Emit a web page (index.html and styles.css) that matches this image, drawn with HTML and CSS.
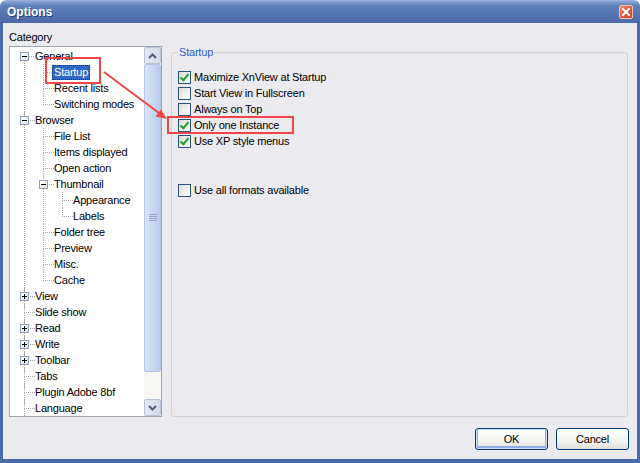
FILE: index.html
```html
<!DOCTYPE html>
<html lang="en">
<head>
    <meta charset="UTF-8">
    <meta name="viewport" content="width=device-width, initial-scale=1.0">
    <title>Options</title>
    <link rel="stylesheet" href="styles.css">
</head>
<body>
    <div class="window">
        <div class="titlebar">
            <span class="title">Options</span>
            <span class="close-btn">
                <svg width="12" height="12" viewBox="0 0 12 12"><path d="M3 3 L9 9 M9 3 L3 9" stroke="#fff" stroke-width="2" stroke-linecap="square"/></svg>
            </span>
        </div>

        <div class="dialog-body">
            <div class="main">
                <div class="category">
                    <div class="category-label">Category</div>
                    <div class="tree-box">
                        <ul class="tree">
                            <li class="has-children">
                                <div class="node"><span class="toggle"></span><span class="label">General</span></div>
                                <ul>
                                    <li><div class="node"><span class="label selected">Startup</span></div></li>
                                    <li><div class="node"><span class="label">Recent lists</span></div></li>
                                    <li><div class="node"><span class="label">Switching modes</span></div></li>
                                </ul>
                            </li>
                            <li class="has-children">
                                <div class="node"><span class="toggle"></span><span class="label">Browser</span></div>
                                <ul>
                                    <li><div class="node"><span class="label">File List</span></div></li>
                                    <li><div class="node"><span class="label">Items displayed</span></div></li>
                                    <li><div class="node"><span class="label">Open action</span></div></li>
                                    <li class="has-children">
                                        <div class="node"><span class="toggle"></span><span class="label">Thumbnail</span></div>
                                        <ul>
                                            <li><div class="node"><span class="label">Appearance</span></div></li>
                                            <li><div class="node"><span class="label">Labels</span></div></li>
                                        </ul>
                                    </li>
                                    <li><div class="node"><span class="label">Folder tree</span></div></li>
                                    <li><div class="node"><span class="label">Preview</span></div></li>
                                    <li><div class="node"><span class="label">Misc.</span></div></li>
                                    <li><div class="node"><span class="label">Cache</span></div></li>
                                </ul>
                            </li>
                            <li><div class="node"><span class="toggle plus"></span><span class="label">View</span></div></li>
                            <li><div class="node"><span class="label">Slide show</span></div></li>
                            <li><div class="node"><span class="toggle plus"></span><span class="label">Read</span></div></li>
                            <li><div class="node"><span class="toggle plus"></span><span class="label">Write</span></div></li>
                            <li><div class="node"><span class="toggle plus"></span><span class="label">Toolbar</span></div></li>
                            <li><div class="node"><span class="label">Tabs</span></div></li>
                            <li><div class="node"><span class="label">Plugin Adobe 8bf</span></div></li>
                            <li><div class="node"><span class="label">Language</span></div></li>
                        </ul>

                        <div class="scrollbar">
                            <div class="sb-btn">
                                <svg width="9" height="6" viewBox="0 0 9 6"><path d="M1 5 L4.5 1.5 L8 5" fill="none" stroke="#4d6185" stroke-width="2"/></svg>
                            </div>
                            <div class="sb-thumb">
                                <svg width="8" height="8" viewBox="0 0 8 8"><path d="M0 0.5 H8 M0 2.5 H8 M0 4.5 H8 M0 6.5 H8" stroke="#8ea5cf" stroke-width="1"/></svg>
                            </div>
                            <div class="sb-track"></div>
                            <div class="sb-btn">
                                <svg width="9" height="6" viewBox="0 0 9 6"><path d="M1 1 L4.5 4.5 L8 1" fill="none" stroke="#4d6185" stroke-width="2"/></svg>
                            </div>
                        </div>
                    </div>
                </div>

                <fieldset class="group">
                    <legend>Startup</legend>
                    <div class="options">
                        <div class="option"><span class="check on"></span>Maximize XnView at Startup</div>
                        <div class="option"><span class="check"></span>Start View in Fullscreen</div>
                        <div class="option"><span class="check"></span>Always on Top</div>
                        <div class="option"><span class="check on"></span>Only one Instance</div>
                        <div class="option"><span class="check on"></span>Use XP style menus</div>
                        <div class="option spaced"><span class="check"></span>Use all formats available</div>
                    </div>
                </fieldset>
            </div>

            <div class="buttons">
                <button class="btn default">OK</button>
                <button class="btn">Cancel</button>
            </div>
        </div>

        <!-- red markup drawn over the dialog -->
        <svg class="annotations" width="640" height="463" viewBox="0 0 640 463">
            <rect x="46" y="58" width="54" height="25" fill="none" stroke="#ef4747" stroke-width="2"/>
            <rect x="168" y="117" width="125" height="16" fill="none" stroke="#ef4747" stroke-width="2"/>
            <line x1="104" y1="72" x2="159" y2="113" stroke="#ef4747" stroke-width="2"/>
            <polygon points="167,119 155.6,116.6 160.8,109.4" fill="#ef4747"/>
        </svg>
    </div>
</body>
</html>
```

FILE: styles.css
```css
* {
    box-sizing: border-box;
}

html, body {
    margin: 0;
    padding: 0;
}

body {
    width: 640px;
    height: 463px;
    overflow: hidden;
    background-color: #fff;
    font-family: "Liberation Sans", Arial, sans-serif;
    font-size: 11px;
    letter-spacing: -0.2px;
    color: #000;
}

.window {
    position: relative;
    width: 640px;
    height: 463px;
    display: flex;
    flex-direction: column;
}

/* title bar */
.titlebar {
    height: 23px;
    display: flex;
    align-items: center;
    justify-content: space-between;
    padding: 0 7px 0 7px;
    border-radius: 6px 6px 0 0;
    background: linear-gradient(#a3badf 0, #7f9dd0 2px, #5e80ba 6px, #5475b1 14px, #4b6aa7 100%);
}

.title {
    font-weight: bold;
    font-size: 12px;
    letter-spacing: 0;
    color: #fff;
    text-shadow: 1px 1px 0 #223f78;
}

.close-btn {
    width: 14px;
    height: 14px;
    display: flex;
    align-items: center;
    justify-content: center;
    border: 1px solid #f3c4b2;
    border-radius: 2px;
    background: linear-gradient(135deg, #eb8f70, #d2563a 60%, #c24526);
}

/* body */
.dialog-body {
    flex: 1;
    display: flex;
    flex-direction: column;
    background-color: #ebeaee;
    border: 3px solid #4a6aa8;
    border-top: none;
    border-bottom-width: 4px;
    padding: 7px 9px 9px 6px;
}

.main {
    display: flex;
    gap: 9px;
    height: 387px;
}

.category {
    width: 153px;
    display: flex;
    flex-direction: column;
}

.category-label {
    height: 14px;
    line-height: 14px;
    margin-bottom: 2px;
}

.tree-box {
    flex: 1;
    display: flex;
    background-color: #fff;
    border: 1px solid #9fa3ad;
    overflow: hidden;
}

/* tree */
.tree, .tree ul {
    list-style: none;
    margin: 0;
    padding: 0;
}

.tree {
    flex: 1;
    padding: 1px 0 0 1px;
    overflow: hidden;
}

.tree ul {
    padding-left: 19px;
}

.tree li {
    position: relative;
}

.tree li::before {
    content: '';
    position: absolute;
    left: 13px;
    top: 0;
    width: 10px;
    height: 8px;
    border-left: 1px dotted #a8a8a8;
    border-bottom: 1px dotted #a8a8a8;
}

.tree li::after {
    content: '';
    position: absolute;
    left: 13px;
    top: 8px;
    bottom: -4px;
    border-left: 1px dotted #a8a8a8;
}

.tree ul li::after {
    bottom: 0;
}

.tree ul li:last-child::after {
    display: none;
}

.tree > li:first-child::before {
    top: 8px;
    height: 0;
    border-left: none;
}

.node {
    position: relative;
    height: 16px;
    display: flex;
    align-items: center;
    padding-left: 24px;
    white-space: nowrap;
}

.label {
    line-height: 15px;
    padding: 0 2px;
    margin-left: -2px;
}

.label.selected {
    background-color: #316ac5;
    color: #fff;
    outline: 1px dotted #1b2c50;
    outline-offset: -1px;
}

.toggle {
    position: absolute;
    left: 9px;
    top: 4px;
    width: 9px;
    height: 9px;
    z-index: 1;
    border: 1px solid #8aa0bd;
    background: linear-gradient(135deg, #fff 30%, #d4d2cb);
}

.toggle::before {
    content: '';
    position: absolute;
    left: 1px;
    top: 3px;
    width: 5px;
    height: 1px;
    background-color: #000;
}

.toggle.plus::after {
    content: '';
    position: absolute;
    left: 3px;
    top: 1px;
    width: 1px;
    height: 5px;
    background-color: #000;
}

/* scrollbar */
.scrollbar {
    width: 17px;
    display: flex;
    flex-direction: column;
    background-color: #f6f6f4;
}

.sb-btn {
    height: 17px;
    display: flex;
    align-items: center;
    justify-content: center;
    border: 1px solid #b8c3d6;
    border-radius: 2px;
    background: linear-gradient(90deg, #e4e9f2, #d3dbe9);
}

.sb-thumb {
    height: 308px;
    display: flex;
    align-items: center;
    justify-content: center;
    border: 1px solid #b3c5e6;
    border-radius: 2px;
    background: linear-gradient(90deg, #d9e4f7, #c6d6f2 60%, #b7c9ec);
}

.sb-track {
    flex: 1;
}

/* group box */
.group {
    flex: 1;
    min-width: 0;
    margin: 16px 0 0 0;
    padding: 0 6px;
    border: 1px solid #d3d2cc;
    border-radius: 3px;
}

.group legend {
    padding: 0 1px;
    line-height: 13px;
    color: #2f62c6;
}

.options {
    margin-top: 10px;
}

.option {
    height: 16px;
    display: flex;
    align-items: center;
    gap: 3px;
    white-space: nowrap;
}

.option.spaced {
    margin-top: 33px;
}

.check {
    position: relative;
    width: 13px;
    height: 13px;
    border: 1px solid #2a5580;
    background: linear-gradient(135deg, #dcdcd7, #fff);
}

.check.on::after {
    content: '';
    position: absolute;
    left: 3px;
    top: 0px;
    width: 3px;
    height: 7px;
    border-right: 2px solid #21a121;
    border-bottom: 2px solid #21a121;
    transform: rotate(40deg);
}

/* buttons */
.buttons {
    margin-top: 11px;
    margin-right: -1px;
    display: flex;
    justify-content: flex-end;
    gap: 8px;
}

.btn {
    width: 73px;
    height: 22px;
    font-family: "Liberation Sans", Arial, sans-serif;
    font-size: 11px;
    letter-spacing: -0.2px;
    color: #000;
    border: 1px solid #003c74;
    border-radius: 3px;
    background: linear-gradient(#ffffff, #f3f3ef 60%, #e2e0d8);
    padding: 0;
}

.btn.default {
    box-shadow: inset 0 0 0 1px #cee0f8, inset 0 -1px 0 2px #8eaee4;
}

.annotations {
    position: absolute;
    left: 0;
    top: 0;
    pointer-events: none;
}
```
